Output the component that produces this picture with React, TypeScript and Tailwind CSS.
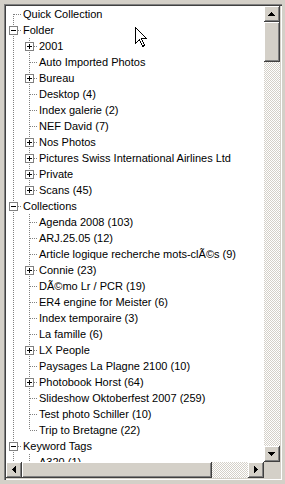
import React from 'react';

type TreeNode = {
  label: string;
  children?: TreeNode[];
  collapsed?: boolean; // has children, not shown (plus box)
  more?: boolean; // siblings continue below the visible area
};

type Row = {
  label: string;
  depth: number;
  guides: boolean[]; // ancestors: keep drawing the vertical line?
  first: boolean;
  last: boolean;
  box: 'plus' | 'minus' | null;
};

const leaf = (label: string): TreeNode => ({ label });
const shut = (label: string): TreeNode => ({ label, collapsed: true });

const tree: TreeNode[] = [
  leaf('Quick Collection'),
  {
    label: 'Folder',
    children: [
      shut('2001'),
      leaf('Auto Imported Photos'),
      shut('Bureau'),
      leaf('Desktop (4)'),
      leaf('Index galerie (2)'),
      leaf('NEF David (7)'),
      shut('Nos Photos'),
      shut('Pictures Swiss International Airlines Ltd'),
      shut('Private'),
      shut('Scans (45)'),
    ],
  },
  {
    label: 'Collections',
    children: [
      leaf('Agenda 2008 (103)'),
      leaf('ARJ.25.05 (12)'),
      leaf('Article logique recherche mots-clÃ©s (9)'),
      shut('Connie (23)'),
      leaf('DÃ©mo Lr / PCR (19)'),
      leaf('ER4 engine for Meister (6)'),
      leaf('Index temporaire (3)'),
      leaf('La famille (6)'),
      shut('LX People'),
      leaf('Paysages La Plagne 2100 (10)'),
      shut('Photobook Horst (64)'),
      leaf('Slideshow Oktoberfest 2007 (259)'),
      leaf('Test photo Schiller (10)'),
      leaf('Trip to Bretagne (22)'),
    ],
  },
  {
    label: 'Keyword Tags',
    more: true,
    children: [{ label: 'A320 (1)', more: true }],
  },
];

function flatten(nodes: TreeNode[], depth = 0, guides: boolean[] = []): Row[] {
  const out: Row[] = [];
  nodes.forEach((n, i) => {
    const last = i === nodes.length - 1 && !n.more;
    const box = n.children ? 'minus' : n.collapsed ? 'plus' : null;
    out.push({ label: n.label, depth, guides, first: depth === 0 && i === 0, last, box });
    if (n.children) out.push(...flatten(n.children, depth + 1, [...guides, !last]));
  });
  return out;
}

const rows = flatten(tree);

const DOT = '#808080';

function Guide({ line }: { line: boolean }) {
  return (
    <svg width="16" height="16" className="shrink-0" shapeRendering="crispEdges">
      {line && <line x1="7.5" y1="0" x2="7.5" y2="16" stroke={DOT} strokeDasharray="1 1" />}
    </svg>
  );
}

function Connector({ row }: { row: Row }) {
  return (
    <svg width="16" height="16" className="shrink-0" shapeRendering="crispEdges">
      {/* vertical: top half and (unless last) bottom half */}
      {!row.first && <line x1="7.5" y1="0" x2="7.5" y2="8" stroke={DOT} strokeDasharray="1 1" />}
      {!row.last && <line x1="7.5" y1="8" x2="7.5" y2="16" stroke={DOT} strokeDasharray="1 1" />}
      <line x1="8" y1="8.5" x2="16" y2="8.5" stroke={DOT} strokeDasharray="1 1" />
      {row.box && (
        <>
          <rect x="3.5" y="4.5" width="8" height="8" fill="#fff" stroke={DOT} />
          <line x1="5" y1="8.5" x2="10" y2="8.5" stroke="#000" />
          {row.box === 'plus' && <line x1="7.5" y1="6" x2="7.5" y2="11" stroke="#000" />}
        </>
      )}
    </svg>
  );
}

const raised =
  'bg-[#d4d0c8] shadow-[inset_-1px_-1px_#404040,inset_1px_1px_#fff,inset_-2px_-2px_#808080,inset_2px_2px_#d4d0c8]';
const checker =
  'bg-[conic-gradient(#fff_25%,#d4d0c8_0_50%,#fff_0_75%,#d4d0c8_0)] bg-[length:2px_2px]';

// little black scroll arrows, drawn pixel by pixel
const arrows = {
  up: [[7, 6, 1, 1], [6, 7, 3, 1], [5, 8, 5, 1], [4, 9, 7, 1]],
  down: [[4, 6, 7, 1], [5, 7, 5, 1], [6, 8, 3, 1], [7, 9, 1, 1]],
  left: [[6, 7, 1, 1], [7, 6, 1, 3], [8, 5, 1, 5], [9, 4, 1, 7]],
  right: [[6, 4, 1, 7], [7, 5, 1, 5], [8, 6, 1, 3], [9, 7, 1, 1]],
};

function Arrow({ dir }: { dir: keyof typeof arrows }) {
  return (
    <svg width="16" height="16" shapeRendering="crispEdges">
      {arrows[dir].map(([x, y, w, h], i) => (
        <rect key={i} x={x} y={y} width={w} height={h} fill="#000" />
      ))}
    </svg>
  );
}

export default function App() {
  return (
    <div className="w-[285px] h-[484px] bg-[#d4d0c8] pt-[4px] pl-[4px] pr-[3px] pb-[4px] font-['Liberation_Sans',Arial,sans-serif] text-[11px] text-black">
      <div className="relative h-full w-full p-[2px] shadow-[inset_1px_1px_#808080,inset_2px_2px_#404040,inset_-1px_-1px_#fff,inset_-2px_-2px_#d4d0c8]">
        <div className="grid h-full w-full grid-cols-[1fr_16px] grid-rows-[1fr_16px] bg-white">
          {/* tree */}
          <div className="overflow-hidden">
            {rows.map((r, i) => (
              <div key={i} className="flex h-4 items-center whitespace-nowrap">
                {r.guides.map((g, j) => (
                  <Guide key={j} line={g} />
                ))}
                <Connector row={r} />
                <span className="pl-[1px] leading-4">{r.label}</span>
              </div>
            ))}
          </div>

          {/* vertical scrollbar */}
          <div className="flex flex-col">
            <div className={`h-4 w-4 ${raised}`}>
              <Arrow dir="up" />
            </div>
            <div className={`h-[40px] w-4 ${raised}`} />
            <div className={`flex-1 ${checker}`} />
            <div className={`h-4 w-4 ${raised}`}>
              <Arrow dir="down" />
            </div>
          </div>

          {/* horizontal scrollbar */}
          <div className="flex">
            <div className={`h-4 w-4 ${raised}`}>
              <Arrow dir="left" />
            </div>
            <div className={`h-4 w-[190px] ${raised}`} />
            <div className={`flex-1 ${checker}`} />
            <div className={`h-4 w-4 ${raised}`}>
              <Arrow dir="right" />
            </div>
          </div>
          <div className="bg-[#d4d0c8]" />
        </div>

        {/* mouse pointer */}
        <svg
          width="13"
          height="21"
          className="absolute left-[131px] top-[23px]"
          shapeRendering="crispEdges"
        >
          <path
            d="M0.5 0.5 L0.5 16.5 L4.5 12.5 L7.5 19.5 L9.5 18.5 L6.5 11.5 L11.5 11.5 Z"
            fill="#fff"
            stroke="#000"
            strokeLinejoin="miter"
          />
        </svg>
      </div>
    </div>
  );
}
